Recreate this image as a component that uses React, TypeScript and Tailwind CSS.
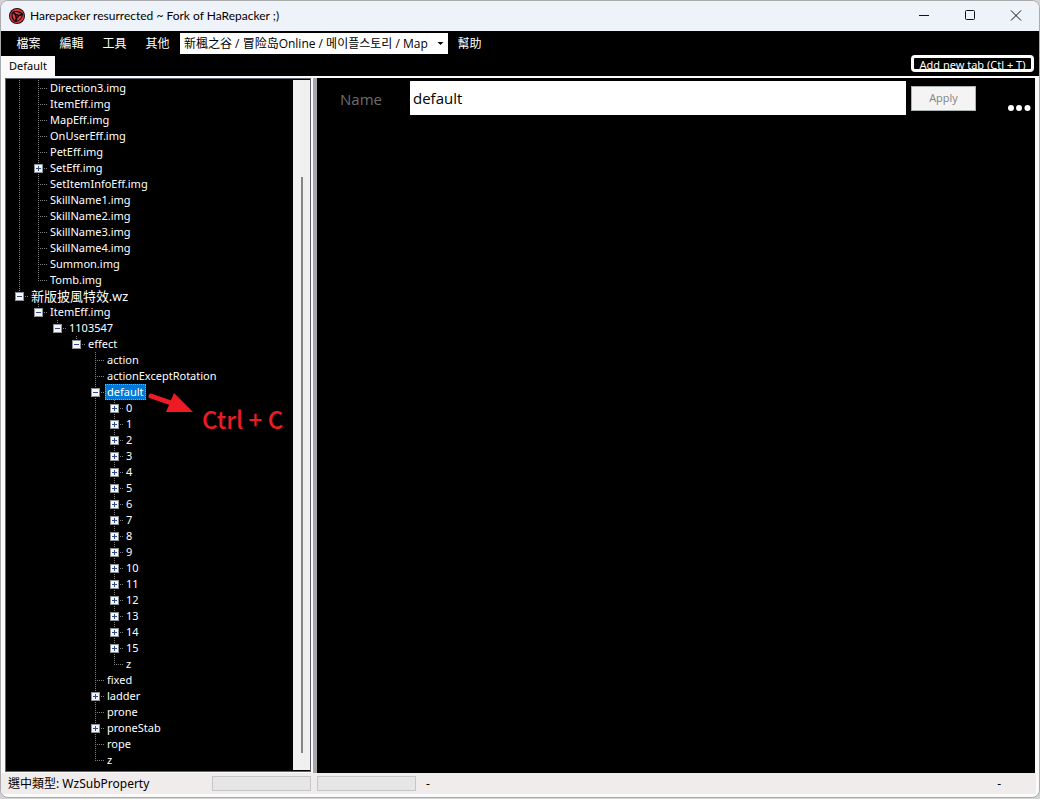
import React from "react";

type TreeItem = {
  name: string;
  state?: "open" | "closed";
  selected?: boolean;
  cjk?: boolean;
  children?: TreeItem[];
};

const leaves = (...names: string[]): TreeItem[] => names.map((name) => ({ name }));

const effectFile: TreeItem[] = [
  ...leaves("Direction3.img", "ItemEff.img", "MapEff.img", "OnUserEff.img", "PetEff.img"),
  { name: "SetEff.img", state: "closed" },
  ...leaves(
    "SetItemInfoEff.img",
    "SkillName1.img",
    "SkillName2.img",
    "SkillName3.img",
    "SkillName4.img",
    "Summon.img",
    "Tomb.img",
  ),
];

const frames: TreeItem[] = Array.from({ length: 16 }, (_, i) => ({
  name: String(i),
  state: "closed",
}));

const capeFile: TreeItem = {
  name: "新版披風特效.wz",
  state: "open",
  cjk: true,
  children: [
    {
      name: "ItemEff.img",
      state: "open",
      children: [
        {
          name: "1103547",
          state: "open",
          children: [
            {
              name: "effect",
              state: "open",
              children: [
                ...leaves("action", "actionExceptRotation"),
                {
                  name: "default",
                  state: "open",
                  selected: true,
                  children: [...frames, { name: "z" }],
                },
                { name: "fixed" },
                { name: "ladder", state: "closed" },
                { name: "prone" },
                { name: "proneStab", state: "closed" },
                ...leaves("rope", "z"),
              ],
            },
          ],
        },
      ],
    },
  ],
};

function Guide({ line }: { line: boolean }) {
  return (
    <svg className="h-4 w-[19px] shrink-0" viewBox="0 0 19 16" aria-hidden="true">
      {line && <path d="M9.5 0V16" stroke="#808080" strokeDasharray="1 1" />}
    </svg>
  );
}

function Joint({ last, state }: { last: boolean; state?: "open" | "closed" }) {
  return (
    <svg className="h-4 w-[19px] shrink-0" viewBox="0 0 19 16" aria-hidden="true">
      <g stroke="#808080" strokeDasharray="1 1" fill="none">
        <path d={last ? "M9.5 0V9" : "M9.5 0V16"} />
        <path d="M9 8.5H18" />
      </g>
      {state && (
        <g shapeRendering="crispEdges">
          <rect x="5" y="4" width="9" height="9" fill="#919191" />
          <rect x="6" y="5" width="7" height="7" fill="#f6f6f6" />
          <path d="M7 8.5H12" stroke="#2b4a9b" />
          {state === "closed" && <path d="M9.5 6V11" stroke="#2b4a9b" />}
        </g>
      )}
    </svg>
  );
}

function Branch({ items, guides }: { items: TreeItem[]; guides: boolean[] }) {
  return (
    <ul role={guides.length ? "group" : undefined}>
      {items.map((item, i) => {
        const last = i === items.length - 1;
        return (
          <li key={item.name} role="treeitem" aria-selected={!!item.selected} aria-expanded={item.state ? item.state === "open" : undefined}>
            <div className="flex h-4 items-center">
              {guides.map((line, g) => (
                <Guide key={g} line={line} />
              ))}
              <Joint last={last} state={item.state} />
              <span
                className={
                  item.selected
                    ? "border border-dotted border-[#ff8728] bg-[#0078d7] px-px text-[11px] leading-[14px] whitespace-nowrap"
                    : item.cjk
                      ? "px-0.5 font-['Lato','Noto_Sans_CJK_TC',sans-serif] text-[13px] leading-4 whitespace-nowrap"
                      : "px-0.5 text-[11px] leading-4 whitespace-nowrap"
                }
              >
                {item.name}
              </span>
            </div>
            {item.children && <Branch items={item.children} guides={[...guides, !last]} />}
          </li>
        );
      })}
    </ul>
  );
}

function Logo() {
  return (
    <svg className="size-4" viewBox="0 0 16 16" aria-hidden="true">
      <circle cx="8" cy="8" r="8" fill="#1d0b0d" />
      <circle cx="8" cy="8" r="7" fill="#dd3c43" />
      <g stroke="#17090b" fill="none">
        <path d="M8 8L4.2 4.4M8 8L13.4 6.4M8 8L6.6 13.4" strokeWidth="1.8" />
        <path d="M3.4 4.4C6 2.8 10.4 3.4 13.6 6M13.6 6.2C13.2 9.6 10.4 12.8 6.8 13.6M6.4 13.6C3.6 11.6 2.4 8 3.4 4.4" strokeWidth="1.2" />
      </g>
      <circle cx="8" cy="8" r="2" fill="#17090b" />
      <circle cx="8" cy="8" r="0.7" fill="#b52f36" />
    </svg>
  );
}

function TitleBar() {
  return (
    <header className="flex h-[30px] items-center bg-[#eef3fa] pl-2">
      <Logo />
      <h1 className="ml-[5px] flex-1 font-['Lato',sans-serif] text-xs text-black">Harepacker resurrected ~ Fork of HaRepacker ;)</h1>
      <button aria-label="Minimize" className="flex h-full w-[46px] items-center justify-center">
        <svg className="size-3" viewBox="0 0 12 12" stroke="#111"><path d="M1 5.5H11" /></svg>
      </button>
      <button aria-label="Maximize" className="flex h-full w-[46px] items-center justify-center">
        <svg className="size-3" viewBox="0 0 12 12" stroke="#111" fill="none"><rect x="1.5" y="0.5" width="9" height="9" rx="1" /></svg>
      </button>
      <button aria-label="Close" className="flex h-full w-[46px] items-center justify-center">
        <svg className="size-3" viewBox="0 0 12 12" stroke="#111"><path d="M1 0.5L11 10.5M11 0.5L1 10.5" /></svg>
      </button>
    </header>
  );
}

function MenuBar() {
  return (
    <nav className="flex h-[25px] items-center bg-black pl-1.5 text-xs text-white">
      {["檔案", "編輯", "工具", "其他"].map((label) => (
        <button key={label} className="w-[43px] text-center">{label}</button>
      ))}
      <div className="relative ml-px h-[21px] w-[268px]">
        <select aria-label="Encoding" className="h-full w-full appearance-none bg-white pl-1 font-['Open_Sans','Noto_Sans_CJK_TC',sans-serif] text-xs text-black">
          <option>新楓之谷 / 冒险岛Online / 메이플스토리 / Map</option>
        </select>
        <svg className="pointer-events-none absolute top-2 right-1 h-[5px] w-[7px]" viewBox="0 0 7 5" aria-hidden="true">
          <path d="M0.5 1H6.5L3.5 4Z" fill="#000" />
        </svg>
      </div>
      <button className="w-[43px] text-center">幫助</button>
    </nav>
  );
}

function TabRow() {
  return (
    <div className="flex h-5 items-end justify-between bg-black pr-[5px]">
      <button role="tab" aria-selected="true" className="h-full w-[54px] bg-[#fafafa] text-[11px] text-black">
        Default
      </button>
      <button className="mb-1 flex h-[17px] w-[123px] justify-center self-end overflow-hidden rounded border-[3px] border-white bg-black text-[11px] leading-[14px] whitespace-nowrap text-white">
        Add new tab (Ctl + T)
      </button>
    </div>
  );
}

function Annotation() {
  return (
    <div className="pointer-events-none absolute top-[310px] left-[140px] flex">
      <svg className="h-7 w-12" viewBox="0 0 48 28" aria-hidden="true">
        <path d="M5 7L28 15" stroke="#ed1c24" strokeWidth="5" strokeLinecap="round" />
        <path d="M28 4L47 23L20 23Z" fill="#ed1c24" />
      </svg>
      <span className="mt-3 ml-2 font-['Noto_Sans_CJK_TC',sans-serif] text-2xl leading-9 font-medium text-[#ed1c24]">Ctrl + C</span>
    </div>
  );
}

function TreePanel() {
  return (
    <aside className="relative mb-px flex w-[306px] shrink-0 border border-[#5d626b] bg-black pt-px text-white">
      <div role="tree" aria-label="Files" className="flex-1 pb-px pl-1">
        <Branch items={effectFile} guides={[true]} />
        <Branch items={[capeFile]} guides={[]} />
      </div>
      <div className="mb-px w-[17px] bg-[#f0f0f0] pt-[97px] pb-[17px]">
        <div className="mx-auto h-full w-0.5 bg-[#858585]" />
      </div>
      <Annotation />
    </aside>
  );
}

function DetailPanel() {
  return (
    <main className="flex-1 bg-black">
      <form className="flex items-start pt-[3px] font-['Open_Sans',sans-serif]" onSubmit={(e) => e.preventDefault()}>
        <label htmlFor="node-name" className="w-[93px] pl-[23px] text-[15px] leading-[36px] text-[#6d6d6d]">Name</label>
        <input id="node-name" defaultValue="default" className="h-[34px] min-w-0 flex-1 bg-white px-[3px] text-[15px] text-black outline-none" />
        <button disabled className="mt-[5px] ml-[5px] h-[25px] w-[65px] border border-[#adb2b5] bg-[#f4f4f4] text-[11px] text-[#838383]">Apply</button>
        <button aria-label="More" type="button" className="mt-6 mr-1 ml-8 h-[6px] w-[23px]">
          <svg className="h-[6px] w-[23px]" viewBox="0 0 23 6" fill="#fff"><circle cx="3" cy="3" r="3" /><circle cx="11" cy="3" r="3" /><circle cx="19.5" cy="3" r="3" /></svg>
        </button>
      </form>
    </main>
  );
}

function StatusBar() {
  return (
    <footer className="mr-[3px] flex h-[21px] items-center bg-[#f0eceb] pl-[7px] text-xs text-black">
      <span className="w-[204px]">選中類型: WzSubProperty</span>
      <div className="h-[15px] w-[99px] border border-[#c6c6c6] bg-[#e6e6e6]" />
      <div className="ml-1.5 h-[15px] w-[99px] border border-[#c6c6c6] bg-[#e6e6e6]" />
      <span className="ml-2.5 flex-1">-</span>
      <span className="mr-[35px]">-</span>
    </footer>
  );
}

export default function App() {
  return (
    <div className="flex min-h-screen flex-col bg-[#d2d2d2] pb-px font-['Noto_Sans','Noto_Sans_CJK_TC',sans-serif]">
      <div className="flex flex-1 flex-col overflow-hidden rounded-lg border border-[#a9abad] bg-[#fafafa] pb-[3px]">
        <TitleBar />
        <MenuBar />
        <TabRow />
        <div className="mt-0.5 flex flex-1 pr-1 pl-1">
          <TreePanel />
          <div className="ml-0.5 w-1 bg-[#a6a6a6]" />
          <DetailPanel />
        </div>
        <StatusBar />
      </div>
    </div>
  );
}
